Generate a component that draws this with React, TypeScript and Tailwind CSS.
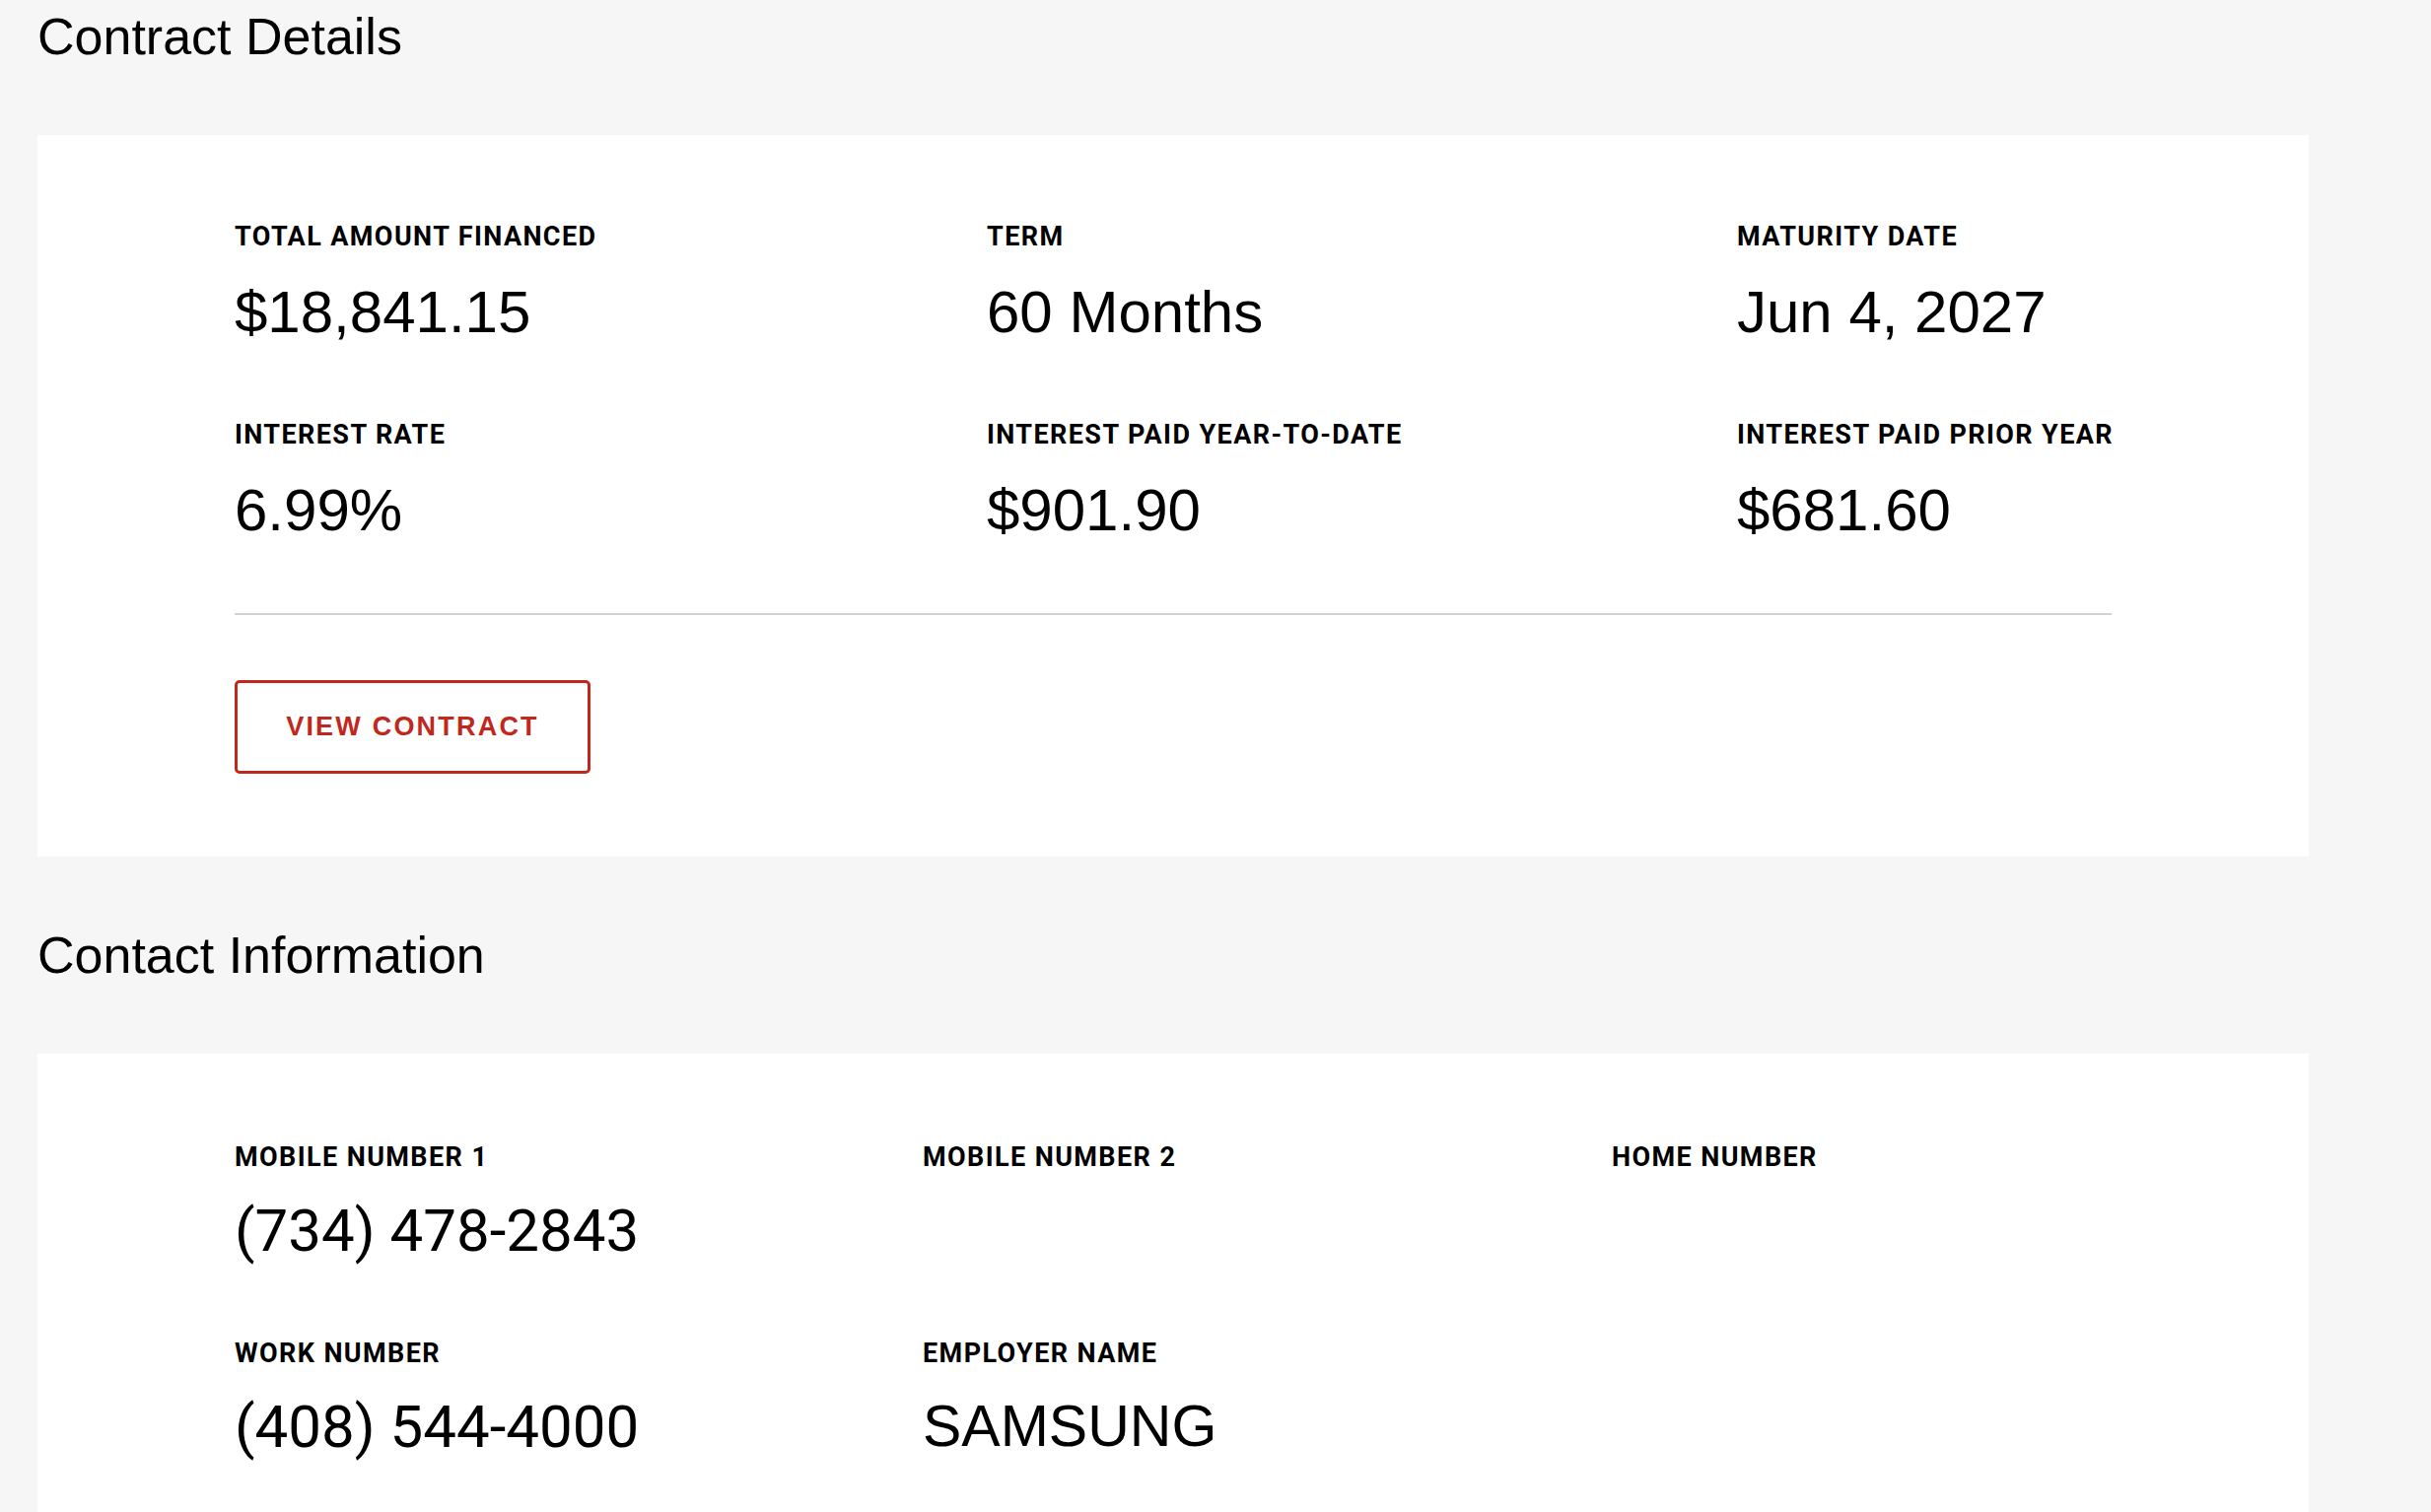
import React from 'react';

const contractFields = [
  { label: 'Total Amount Financed', value: '$18,841.15' },
  { label: 'Term', value: '60 Months' },
  { label: 'Maturity Date', value: 'Jun 4, 2027' },
  { label: 'Interest Rate', value: '6.99%' },
  { label: 'Interest Paid Year-To-Date', value: '$901.90' },
  { label: 'Interest Paid Prior Year', value: '$681.60' },
];

const contactFields = [
  { label: 'Mobile Number 1', value: '(734) 478-2843', phone: true },
  { label: 'Mobile Number 2', value: '', phone: true },
  { label: 'Home Number', value: '', phone: true },
  { label: 'Work Number', value: '(408) 544-4000', phone: true },
  { label: 'Employer Name', value: 'SAMSUNG', phone: false },
];

const Label = ({ children }: { children: React.ReactNode }) => (
  <div className="whitespace-nowrap font-['Roboto',sans-serif] font-bold text-[27px] leading-[26px] tracking-[1.4px] uppercase text-black">
    {children}
  </div>
);

const SectionHeading = ({ title }: { title: string }) => (
  <h2 className="font-['Liberation_Sans',Arial,sans-serif] text-[52px] leading-none font-normal text-black">
    {title}
  </h2>
);

const App = () => {
  return (
    <div className="min-h-screen bg-[#f6f6f6] pl-[38px] pr-[124px] pt-[11px]">
      {/* Contract Details */}
      <SectionHeading title="Contract Details" />
      <section className="mt-[74px] bg-white px-[200px] pt-[90px] pb-[84px]">
        <div className="grid grid-cols-[763px_761px_1fr] gap-y-[82px]">
          {contractFields.map((f) => (
            <div key={f.label}>
              <Label>{f.label}</Label>
              <div className="mt-[34px] h-[59px] whitespace-nowrap font-['Liberation_Sans',Arial,sans-serif] text-[60px] leading-[59px] text-black">
                {f.value}
              </div>
            </div>
          ))}
        </div>
        <div className="mt-[75px] h-[2px] bg-[#d2d2d2]" />
        <button className="mt-[66px] flex h-[95px] w-[361px] items-center justify-center rounded-[5px] border-[3px] border-[#c0281e] bg-white font-['Liberation_Sans',Arial,sans-serif] text-[27px] font-bold uppercase tracking-[2.2px] text-[#c0281e]">
          View Contract
        </button>
      </section>

      {/* Contact Information */}
      <div className="mt-[74px]">
        <SectionHeading title="Contact Information" />
      </div>
      <section className="mt-[74px] bg-white px-[200px] pt-[92px] pb-[90px]">
        <div className="grid grid-cols-[698px_699px_1fr] gap-y-[82px]">
          {contactFields.map((f) => (
            <div key={f.label}>
              <Label>{f.label}</Label>
              <div
                className={
                  f.phone
                    ? "mt-[32px] h-[59px] whitespace-nowrap font-['Roboto',sans-serif] text-[60px] leading-[59px] text-black"
                    : "mt-[32px] h-[59px] whitespace-nowrap font-['Liberation_Sans',Arial,sans-serif] text-[59px] leading-[59px] text-black"
                }
              >
                {f.value}
              </div>
            </div>
          ))}
        </div>
      </section>
    </div>
  );
};

export default App;
